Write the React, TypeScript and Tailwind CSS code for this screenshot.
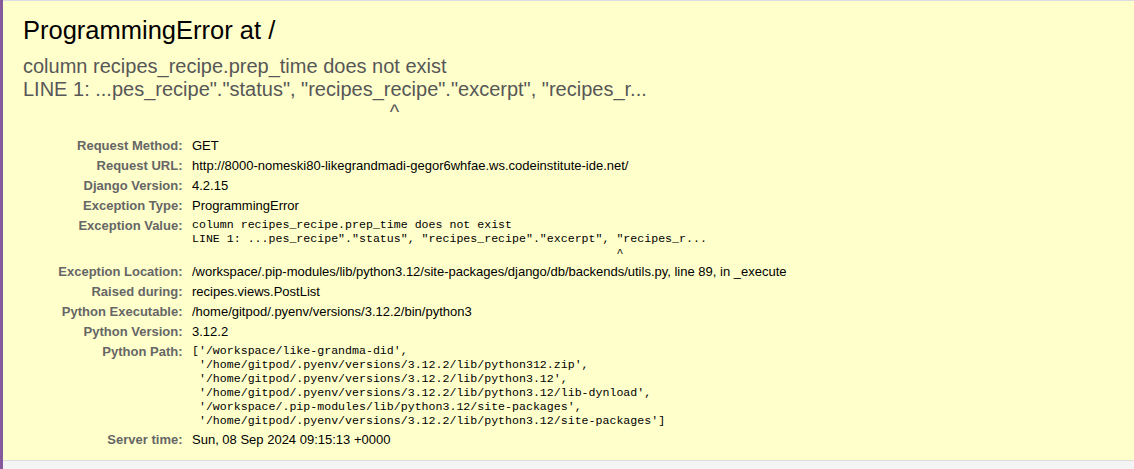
const monoCaret = " ".repeat(61) + "^"
const titleCaret = " ".repeat(66) + "^"

const rows: { label: string; value: string; mono?: boolean }[] = [
  { label: "Request Method:", value: "GET" },
  { label: "Request URL:", value: "http://8000-nomeski80-likegrandmadi-gegor6whfae.ws.codeinstitute-ide.net/" },
  { label: "Django Version:", value: "4.2.15" },
  { label: "Exception Type:", value: "ProgrammingError" },
  {
    label: "Exception Value:",
    mono: true,
    value:
      'column recipes_recipe.prep_time does not exist\nLINE 1: ...pes_recipe"."status", "recipes_recipe"."excerpt", "recipes_r...\n' + monoCaret,
  },
  { label: "Exception Location:", value: "/workspace/.pip-modules/lib/python3.12/site-packages/django/db/backends/utils.py, line 89, in _execute" },
  { label: "Raised during:", value: "recipes.views.PostList" },
  { label: "Python Executable:", value: "/home/gitpod/.pyenv/versions/3.12.2/bin/python3" },
  { label: "Python Version:", value: "3.12.2" },
  {
    label: "Python Path:",
    mono: true,
    value: [
      "['/workspace/like-grandma-did',",
      " '/home/gitpod/.pyenv/versions/3.12.2/lib/python312.zip',",
      " '/home/gitpod/.pyenv/versions/3.12.2/lib/python3.12',",
      " '/home/gitpod/.pyenv/versions/3.12.2/lib/python3.12/lib-dynload',",
      " '/workspace/.pip-modules/lib/python3.12/site-packages',",
      " '/home/gitpod/.pyenv/versions/3.12.2/lib/python3.12/site-packages']",
    ].join("\n"),
  },
  { label: "Server time:", value: "Sun, 08 Sep 2024 09:15:13 +0000" },
]

export default function App() {
  return (
    <div className="min-h-[469px] bg-[#f4f4f4] border-l-[3px] border-[#85599b] font-['Liberation_Sans',Arial,sans-serif] text-[13px] text-black">
      <div className="bg-[#ffffcc] border-t border-t-[#dcdce4] border-b border-b-[#dddddd] pl-5 pr-5 pt-[10px] pb-[10px]">
        <h1 className="text-[25.5px] leading-[30px] font-normal mt-[4px]">ProgrammingError at /</h1>
        <pre className="mt-[10px] mb-[12px] font-['Liberation_Sans',Arial,sans-serif] text-[20px] leading-[23px] text-[#575757] whitespace-pre">
          {'column recipes_recipe.prep_time does not exist\nLINE 1: ...pes_recipe"."status", "recipes_recipe"."excerpt", "recipes_r...\n' + titleCaret}
        </pre>
        <table className="border-collapse">
          <tbody>
            {rows.map((r) => (
              <tr key={r.label}>
                <th className="w-[166px] min-w-[166px] text-right align-top text-[#666] font-bold pl-[3px] pr-[6.5px] py-[2px] leading-4 whitespace-nowrap">
                  {r.label}
                </th>
                <td className="align-top px-[3px] py-[2px] leading-4">
                  {r.mono ? (
                    <pre className="font-['Liberation_Mono','Courier_New',monospace] text-[11.6px] leading-[14px] whitespace-pre">{r.value}</pre>
                  ) : (
                    r.value
                  )}
                </td>
              </tr>
            ))}
          </tbody>
        </table>
      </div>
    </div>
  )
}
